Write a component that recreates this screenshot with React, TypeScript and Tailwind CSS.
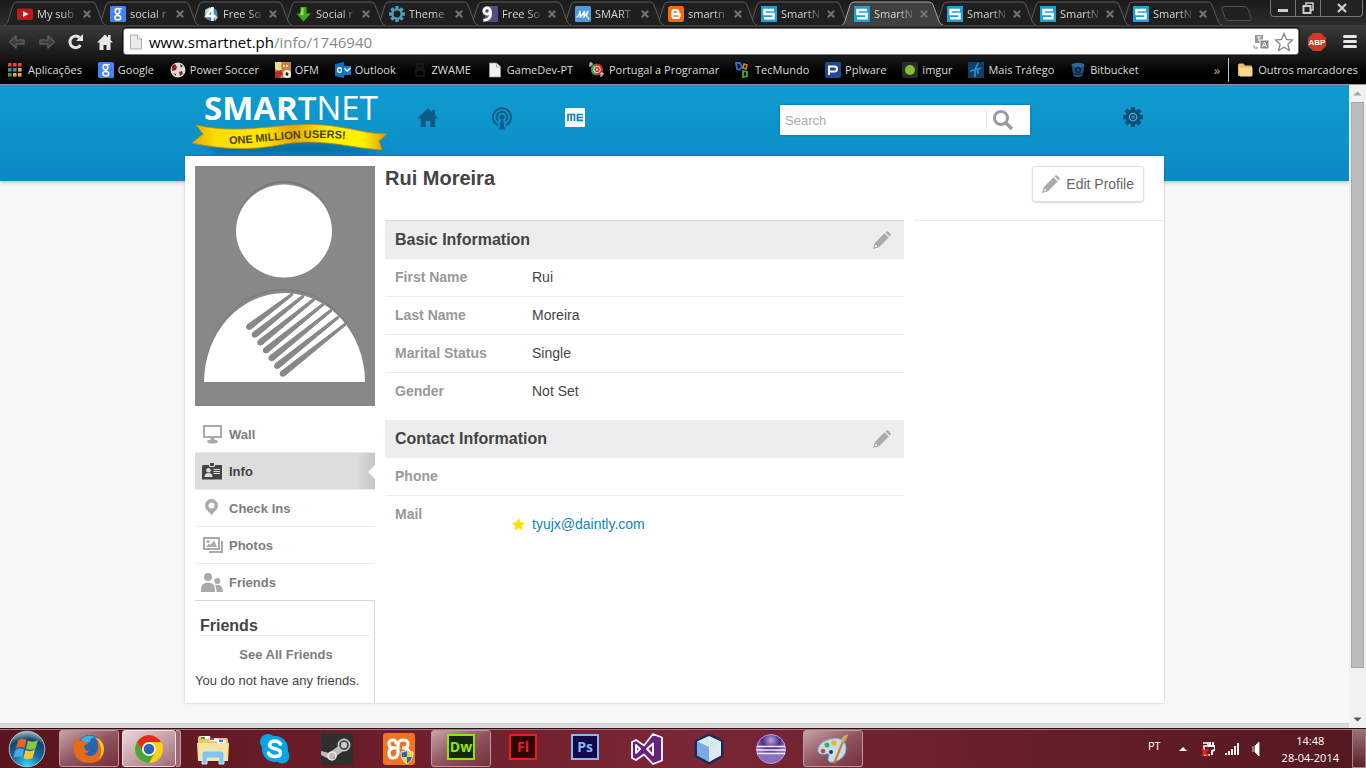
import React from 'react';
import type { ReactNode } from 'react';

const UI = "font-['Open_Sans','Noto_Sans',sans-serif]";
const ARIAL = "font-['Liberation_Sans',Arial,sans-serif]";

/* ---------- small site icons ---------- */

const Icon16 = ({ children }: { children: ReactNode }) => (
  <svg viewBox="0 0 16 16" className="size-4 shrink-0" aria-hidden="true">
    {children}
  </svg>
);

const YouTube = () => (
  <Icon16>
    <rect x="0" y="2.5" width="16" height="11.5" rx="2" fill="#c4171c" />
    <path d="M6 5v6l5.5-3z" fill="#fff" />
  </Icon16>
);

const GoogleG = () => (
  <Icon16>
    <rect width="16" height="16" rx="1.5" fill="#4583ee" />
    <g fill="none" stroke="#fff">
      <ellipse cx="7.5" cy="5.2" rx="2.3" ry="2.6" strokeWidth="1.6" />
      <path d="M9 3.2 11.8 2.4M8.6 7.6C6 8.4 7 9.4 8.6 10" strokeWidth="1.3" />
      <ellipse cx="7.8" cy="11.7" rx="2.9" ry="2.1" strokeWidth="1.5" />
    </g>
  </Icon16>
);

const Four = () => (
  <Icon16>
    <circle cx="8" cy="8" r="6.6" fill="#4b86a8" />
    <path d="M2 4l5-3 1 4-5 6zM11 9l4 2-3 4z" fill="#bcd7e6" />
    <path d="M9.5 1v14M9.5 1.5 3.5 10h9" fill="none" stroke="#fff" strokeWidth="2.4" />
  </Icon16>
);

const DownArrow = () => (
  <Icon16>
    <path d="M4.500 1h6v6.500H15L7.500 15.500.5 7.500h4z" fill="#3fae13" />
    <path d="M5.500 2h2v7H4z" fill="#8be05a" />
  </Icon16>
);

const Gear = ({ fill, hole }: { fill: string; hole: string }) => (
  <>
    {[0, 45, 90, 135].map((a) => (
      <rect key={a} x="6.3" y="0" width="3.4" height="16" rx="0.5" fill={fill} transform={`rotate(${a} 8 8)`} />
    ))}
    <circle cx="8" cy="8" r="5.800" fill={fill} />
    <circle cx="8" cy="8" r="3.4" fill={hole} />
  </>
);

const ThemeGear = () => (
  <Icon16>
    <Gear fill="#4e9bb8" hole="#202020" />
  </Icon16>
);

const Nine = () => (
  <Icon16>
    <rect width="16" height="16" fill="#5b4a82" />
    <rect width="3" height="16" fill="#2d2640" />
    <circle cx="5" cy="5" r="3.200" fill="none" stroke="#fff" strokeWidth="2.800" />
    <path d="M8.300 5c1 6-1 9-7 9.300" fill="none" stroke="#fff" strokeWidth="2.800" />
  </Icon16>
);

const ScriptM = () => (
  <Icon16>
    <rect width="16" height="16" rx="1.500" fill="#4f9be0" />
    <path
      d="M1.500 11c2 0 3-3 3.700-6l.2 6c1.500-1 2.500-3 4-6L9 11c1.500-1 2.500-4 4-6-1 2-2 6-.5 6"
      fill="none"
      stroke="#fff"
      strokeWidth="1.400"
    />
    <circle cx="13.500" cy="12.500" r="1" fill="#fff" />
  </Icon16>
);

const Blogger = () => (
  <Icon16>
    <rect width="16" height="16" rx="2.500" fill="#fb6a0a" />
    <path
      d="M6 3h2.500C10.500 3 11.500 4.500 11.500 6.300c0 .9.300 1 1.200 1V10c0 2-1.500 3-3 3H6c-1.500 0-2.700-1.200-2.700-2.700V5.700C3.300 4.200 4.500 3 6 3z"
      fill="#fff"
    />
    <path d="M6.300 6h2M6.300 10h3.500" stroke="#fb6a0a" strokeWidth="1.500" strokeLinecap="round" />
  </Icon16>
);

const SmartS = () => (
  <Icon16>
    <rect width="16" height="16" fill="#1f9fd6" />
    <path d="M13 4H3.500v4h9v4.200H3" fill="none" stroke="#fff" strokeWidth="2.500" />
  </Icon16>
);

const Apps = () => (
  <Icon16>
    {['#e2463c', '#e2463c', '#e2463c', '#35a15b', '#4285d6', '#f0a928', '#35a15b', '#f0a928', '#f0a928'].map((c, i) => (
      <rect key={i} x={(i % 3) * 5} y={1 + Math.floor(i / 3) * 5} width="3.600" height="3.600" fill={c} />
    ))}
  </Icon16>
);

const Ball = () => (
  <Icon16>
    <circle cx="8" cy="8" r="7.500" fill="#dcdcdc" />
    <path d="M2 4l3-2 2 3-1 3-4 1z" fill="#9b1c22" />
    <path d="M9 10l3-1 1 3-3 2z" fill="#9b1c22" />
    <path d="M10 2l3 2-2 2zM3 11l3 1v2z" fill="#444" />
  </Icon16>
);

const Ofm = () => (
  <Icon16>
    <rect width="16" height="16" fill="#b9824b" />
    <path d="M0 0h6l3 5-4 4-5-2z" fill="#eedb9c" />
    <circle cx="10" cy="4" r="4" fill="#d77b38" />
    <circle cx="9" cy="4" r="1" fill="#fff" />
    <circle cx="12" cy="4" r="1" fill="#fff" />
    <path d="M0 10l6-2 2 4-4 4H0z" fill="#b33322" />
    <circle cx="12" cy="12" r="4" fill="#eee" />
    <path d="M11 10l2.500 1-.5 3-2.500-1z" fill="#222" />
  </Icon16>
);

const Outlook = () => (
  <Icon16>
    <rect x="7" y="4" width="9" height="9" fill="#1e78c8" />
    <path d="M9.500 6.500l2.500 2.500L15.500 6" fill="none" stroke="#fff" strokeWidth="1.300" />
    <path d="M0 2l9-2v16l-9-2z" fill="#0f6fc0" />
    <ellipse cx="4.500" cy="8" rx="1.900" ry="2.400" fill="none" stroke="#fff" strokeWidth="1.400" />
  </Icon16>
);

const Zwame = () => (
  <Icon16>
    <path d="M5 2h6v4H5zM4 8h8v6H4z" fill="none" stroke="#1d1d1d" strokeWidth="1.500" />
  </Icon16>
);

const Doc = ({ shade = '#f1f1f1' }: { shade?: string }) => (
  <Icon16>
    <path d="M2.500 1h7l4 4v10h-11z" fill={shade} stroke="#9a9a9a" strokeWidth="0.800" />
    <path d="M9.500 1v4h4" fill="#fff" stroke="#9a9a9a" strokeWidth="0.800" />
  </Icon16>
);

const Papoula = () => (
  <Icon16>
    <circle cx="8" cy="7.500" r="6" fill="#c92d2d" />
    <path d="M6 2a6 6 0 0 0 1 11.500z" fill="#3f9c44" />
    <circle cx="8" cy="7.500" r="3.300" fill="none" stroke="#f1e4d8" strokeWidth="1" />
    <circle cx="8" cy="7.500" r="1" fill="#fff" />
    <path d="M1 5V1h2v2H1M12 15v-4h2v2h-2" fill="none" stroke="#eee" />
  </Icon16>
);

const Tec = () => (
  <Icon16>
    <path d="M1 1h4l2 4-3 3-2-1z" fill="none" stroke="#2d6fd0" strokeWidth="1.800" />
    <path d="M9 2l3 1-1 4-3-1z" fill="none" stroke="#d97a26" strokeWidth="1.500" />
    <path d="M8 9l4 1v4l-4 1z" fill="none" stroke="#45a835" strokeWidth="1.800" />
  </Icon16>
);

const Ppl = () => (
  <Icon16>
    <rect width="16" height="16" rx="2" fill="#1f4a8f" />
    <path d="M4 13V4.500h5.500a2.500 2.500 0 0 1 0 5H5" fill="none" stroke="#fff" strokeWidth="1.900" />
  </Icon16>
);

const Imgur = () => (
  <Icon16>
    <rect width="16" height="16" rx="2" fill="#2a2a2a" />
    <circle cx="8" cy="8" r="5" fill="#87bf2c" />
  </Icon16>
);

const Trafego = () => (
  <Icon16>
    <rect width="16" height="16" fill="#123f66" />
    <path d="M10 1L7 8v7M2 9l5-1 6-2M10 8v4" fill="none" stroke="#2f8fd2" strokeWidth="1.700" />
  </Icon16>
);

const Bucket = () => (
  <Icon16>
    <path d="M1.500 3l2 11q4.500 2.500 9 0l2-11z" fill="#205081" />
    <ellipse cx="8" cy="3" rx="6.500" ry="2.200" fill="#2f669b" />
    <circle cx="8" cy="8" r="2.300" fill="none" stroke="#0a1826" strokeWidth="1.300" />
    <path d="M3.500 11.500q4.500 2 9 0" fill="none" stroke="#0a1826" />
  </Icon16>
);

const Folder = () => (
  <Icon16>
    <path d="M1 3q0-1.500 1.500-1.500h4L8 3.500h6q1 0 1 1V13q0 1-1 1H2q-1 0-1-1z" fill="#e8b868" />
    <path d="M2 5.500h13.500V13q0 1.500-1.500 1.500H3z" fill="#f9d894" />
  </Icon16>
);

/* ---------- browser ---------- */

type Tab = { title: string; icon: ReactNode; active?: boolean };

const tabs: Tab[] = [
  { title: 'My sub', icon: <YouTube /> },
  { title: 'social r', icon: <GoogleG /> },
  { title: 'Free So', icon: <Four /> },
  { title: 'Social r', icon: <DownArrow /> },
  { title: 'Theme', icon: <ThemeGear /> },
  { title: 'Free So', icon: <Nine /> },
  { title: 'SMART', icon: <ScriptM /> },
  { title: 'smartn', icon: <Blogger /> },
  { title: 'SmartN', icon: <SmartS /> },
  { title: 'SmartN', icon: <SmartS />, active: true },
  { title: 'SmartN', icon: <SmartS /> },
  { title: 'SmartN', icon: <SmartS /> },
  { title: 'SmartN', icon: <SmartS /> },
];

const TabStrip = () => (
  <div className="flex h-[25px] bg-gradient-to-b from-[#1b1b1b] to-[#2b2b2b] pl-[5px]">
    <ul className="flex">
      {tabs.map((t, i) => (
        <li key={i} className="relative w-[93px] shrink-0" style={{ zIndex: t.active ? 30 : 20 - i }}>
          <svg viewBox="0 0 103 25" className="absolute top-0 left-0 h-[25px] w-[103px]" aria-hidden="true">
            <path
              d="M0 25C2 24 2 23 3 21L8 5Q9 2 12 2H87Q90 2 91 5L97 21C98 23 98 24 101 25"
              fill={t.active ? '#404040' : '#1f1f1f'}
              stroke={t.active ? '#a3a3a3' : '#5a5a5a'}
            />
          </svg>
          <div className="relative flex h-[25px] items-center pt-[2px] pl-3">
            {t.icon}
            <button className="ml-1 w-[42px] text-left text-[11px] leading-4 whitespace-nowrap text-[#d6d6d6] [mask-image:linear-gradient(to_right,#000_60%,transparent)]">
              {t.title}
            </button>
            <button aria-label="Close tab" className="flex size-4 items-center justify-center">
              <svg viewBox="0 0 8 8" className="size-2" aria-hidden="true">
                <path d="M0.800 0.800l6.400 6.400M7.200 0.800L0.800 7.200" stroke="#707070" strokeWidth="2.200" />
              </svg>
            </button>
          </div>
        </li>
      ))}
    </ul>
    <button aria-label="New tab" className="ml-[7px] self-start pt-[6px]">
      <svg viewBox="0 0 32 15" className="h-[15px] w-8" aria-hidden="true">
        <path d="M3 .5h20q3 0 4 3l3 8q1 3-2 3H8q-3 0-4-3L1 3.500Q0 .5 3 .5z" fill="#202020" stroke="#555" />
      </svg>
    </button>
    <div className="mr-[3px] ml-auto flex h-[17px] divide-x divide-[#777] rounded-b border border-t-0 border-[#777] bg-[#222]">
      <button aria-label="Minimise" className="flex w-[25px] items-center justify-center">
        <svg viewBox="0 0 12 12" className="size-3" aria-hidden="true">
          <rect x="1" y="7" width="10" height="3" fill="#ccc" />
        </svg>
      </button>
      <button aria-label="Restore" className="flex w-[25px] items-center justify-center">
        <svg viewBox="0 0 12 12" className="size-3" aria-hidden="true">
          <path d="M4 3V1h7v7H9" fill="none" stroke="#ccc" strokeWidth="1.500" />
          <rect x="1.500" y="4" width="7" height="7" fill="none" stroke="#ccc" strokeWidth="2" />
        </svg>
      </button>
      <button aria-label="Close" className="flex w-[41px] items-center justify-center">
        <svg viewBox="0 0 12 12" className="size-3" aria-hidden="true">
          <path d="M2 2l8 8M10 2l-8 8" stroke="#ccc" strokeWidth="2.400" />
        </svg>
      </button>
    </div>
  </div>
);

const NavArrow = ({ flip }: { flip?: boolean }) => (
  <svg viewBox="0 0 18 16" className={flip ? 'h-4 w-[18px] -scale-x-100' : 'h-4 w-[18px]'} aria-hidden="true">
    <path d="M8 2L1.500 8 8 14v-4h8V6H8z" fill="#3b3b3b" stroke="#5c5c5c" strokeWidth="1.500" strokeLinejoin="round" />
  </svg>
);

const Toolbar = () => (
  <div className="flex h-8 items-center pt-px pl-2">
    <button aria-label="Back">
      <NavArrow />
    </button>
    <button aria-label="Forward" className="ml-3">
      <NavArrow flip />
    </button>
    <button aria-label="Reload" className="ml-[11px]">
      <svg viewBox="0 0 18 18" className="size-[18px]" aria-hidden="true">
        <path d="M13.500 12.200A5.800 5.800 0 1 1 12.500 4.500" fill="none" stroke="#e6e6e6" strokeWidth="3" />
        <path d="M16 1v7H9z" fill="#e6e6e6" />
      </svg>
    </button>
    <button aria-label="Home" className="ml-3">
      <svg viewBox="0 0 16 16" className="size-4" aria-hidden="true">
        <path d="M8 .5L0 8.500h2.500V16H6.500v-5h3v5h4V8.500H16l-2.500-2.500V1h-2.500v2.500z" fill="#e9e9e9" />
      </svg>
    </button>
    <div className="ml-[10px] flex h-[27px] flex-1 items-center rounded-[3px] border border-[#777] bg-white px-[4px] outline-1 outline-[#111]">
      <Doc shade="#ececec" />
      <div role="textbox" aria-label="Address" tabIndex={0} className="ml-[5px] flex-1 text-[15px] leading-5 text-[#888]">
        <span className="text-black">www.smartnet.ph</span>/info/1746940
      </div>
      <button aria-label="Translate">
        <svg viewBox="0 0 16 16" className="size-4" aria-hidden="true">
          <rect x="2" y="1" width="8" height="8" fill="#999" />
          <rect x="7" y="6" width="9" height="9" fill="#8a8a8a" stroke="#fff" />
          <path d="M4 3h4M6 3v4" stroke="#fff" />
          <path d="M9.500 13l2-5 2 5M10.500 11.500h2" fill="none" stroke="#fff" />
          <path d="M1 11v3h3M3 12.500L4.500 14 3 15.500" fill="none" stroke="#999" />
        </svg>
      </button>
      <button aria-label="Bookmark this page" className="ml-[5px]">
        <svg viewBox="0 0 20 20" className="size-5" aria-hidden="true">
          <path
            d="M10 1.500l2.500 6 6 .5-4.600 4.200 1.400 6.300L10 15.200l-5.300 3.300 1.400-6.300L1.500 8l6-.5z"
            fill="#fff"
            stroke="#858585"
            strokeWidth="1.300"
          />
        </svg>
      </button>
    </div>
    <button aria-label="Ad blocker" className="ml-2">
      <svg viewBox="0 0 20 20" className="size-5" aria-hidden="true">
        <path d="M6 1h8l5 5v8l-5 5H6l-5-5V6z" fill="#d13a22" />
        <text x="10" y="13" textAnchor="middle" fontSize="8" fontWeight="700" fill="#fff" fontFamily="Liberation Sans">
          ABP
        </text>
      </svg>
    </button>
    <button aria-label="Menu" className="mr-[9px] ml-[16px] flex w-[14px] flex-col gap-[2px]">
      <span className="h-[3px] w-full rounded-sm bg-[#e6e6e6]" />
      <span className="h-[3px] w-full rounded-sm bg-[#e6e6e6]" />
      <span className="h-[3px] w-full rounded-sm bg-[#e6e6e6]" />
    </button>
  </div>
);

const bookmarks: [string, ReactNode][] = [
  ['Aplicações', <Apps />],
  ['Google', <GoogleG />],
  ['Power Soccer', <Ball />],
  ['OFM', <Ofm />],
  ['Outlook', <Outlook />],
  ['ZWAME', <Zwame />],
  ['GameDev-PT', <Doc />],
  ['Portugal a Programar', <Papoula />],
  ['TecMundo', <Tec />],
  ['Pplware', <Ppl />],
  ['imgur', <Imgur />],
  ['Mais Tráfego', <Trafego />],
  ['Bitbucket', <Bucket />],
];

const BookmarkBar = () => (
  <nav aria-label="Bookmarks" className="flex h-[27px] items-center pr-2 pb-[2px] pl-2 text-[11px] leading-4 text-[#dcdcdc]">
    <ul className="mr-[75px] flex flex-1 justify-between">
      {bookmarks.map(([name, icon]) => (
        <li key={name}>
          <a href="#" className="flex items-center gap-1 whitespace-nowrap">
            {icon}
            {name}
          </a>
        </li>
      ))}
    </ul>
    <button aria-label="More bookmarks" className="text-[13px] text-[#aaa]">
      »
    </button>
    <a href="#" className="ml-2 flex h-6 items-center gap-[5px] border-l border-[#b8c4d4] pl-2 whitespace-nowrap">
      <Folder />
      Outros marcadores
    </a>
  </nav>
);

/* ---------- site ---------- */

const Logo = () => (
  <a href="#" aria-label="SmartNet" className="block pl-1">
    <svg viewBox="0 0 204 70" className="h-[70px] w-[204px]">
      <defs>
        <linearGradient id="ribbon" x1="0" x2="1">
          <stop offset="0" stopColor="#e9a800" />
          <stop offset="0.120" stopColor="#fbdc07" />
          <stop offset="0.350" stopColor="#ffe800" />
          <stop offset="0.520" stopColor="#e2a800" />
          <stop offset="0.700" stopColor="#fff200" />
          <stop offset="0.880" stopColor="#ffee00" />
          <stop offset="1" stopColor="#dc9a00" />
        </linearGradient>
        <filter id="soft" x="-20%" y="-50%" width="140%" height="220%">
          <feGaussianBlur stdDeviation="4" />
        </filter>
        <path id="slogan" d="M40 59C80 58 110 49 166 55" />
      </defs>
      <path d="M14 58C70 66 110 50 190 66L188 68H30z" fill="#064a73" opacity="0.600" filter="url(#soft)" />
      <text x="15" y="35" fontSize="33" fill="#fff" fontFamily="'Open Sans'">
        <tspan fontWeight="700">SMAR</tspan>
        <tspan fontWeight="600">T</tspan>
        <tspan fontWeight="400">NET</tspan>
      </text>
      <path
        d="M7 40C60 52 100 33 150 42C170 45 180 49 198 49L190 56L193 65C160 63 130 52 90 60C60 66 30 64 3 58L14 49z"
        fill="url(#ribbon)"
        stroke="#c98a00"
        strokeWidth="0.800"
      />
      <text fontSize="11" fontWeight="700" fill="#4b4400" fontFamily="'Liberation Sans'">
        <textPath href="#slogan">ONE MILLION USERS!</textPath>
      </text>
    </svg>
  </a>
);

const SiteHeader = () => (
  <header className="h-24 shrink-0 bg-gradient-to-b from-[#0f9dd0] to-[#0b89c4] shadow-[0_1px_4px_rgba(0,0,0,0.300)]">
    <div className="mx-auto flex max-w-[979px] items-start">
      <Logo />
      <nav className="flex pt-[22px] pl-[24px]" aria-label="Main">
        <a href="#" aria-label="Home" className="mr-[52px]">
          <svg viewBox="0 0 22 22" className="size-[22px]" aria-hidden="true">
            <path d="M11 1L.5 11.500h3.200V20h5v-6h4.500v6h5v-8.500h3.300L18 8V3h-3v2z" fill="#0a5c85" />
          </svg>
        </a>
        <a href="#" aria-label="Check ins" className="mr-[52px]">
          <svg viewBox="0 0 22 24" className="h-6 w-[22px]" aria-hidden="true">
            <g fill="none" stroke="#0a5c85" strokeWidth="2">
              <path d="M7 18.300A9 9 0 1 1 15 18.300" />
              <path d="M7.500 14A5.300 5.300 0 1 1 14.500 14" />
            </g>
            <circle cx="11" cy="10" r="2.600" fill="#0a5c85" />
            <path d="M10 13h2l2 9.500H8z" fill="#0a5c85" />
          </svg>
        </a>
        <a href="#" aria-label="Me">
          <svg viewBox="0 0 20 20" className="mt-px size-5" aria-hidden="true">
            <rect y="0" width="20" height="19" rx="1" fill="#fff" />
            <path d="M3 13V6.500h6.500V13M6.200 6.500V13M18 6.500h-5.500v5.800H18M12.500 9.500H18" fill="none" stroke="#0e86b8" strokeWidth="1.700" />
          </svg>
        </a>
      </nav>
      <form className="mt-5 ml-auto flex h-[30px] w-[250px] items-center bg-white shadow-[0_0_3px_rgba(0,0,0,0.250)]">
        <label htmlFor="search" className="sr-only">
          Search
        </label>
        <input
          id="search"
          placeholder="Search"
          className="h-full min-w-0 flex-1 px-[5px] text-[13px] text-[#444] outline-none placeholder:text-[#aaa]"
        />
        <button type="button" aria-label="Search" className="h-6 w-11 border-l border-[#eaeaea] pl-[6px]">
          <svg viewBox="0 0 20 20" className="size-5" aria-hidden="true">
            <circle cx="8" cy="8" r="6.500" fill="none" stroke="#9b9b9b" strokeWidth="3" />
            <path d="M13 13l6 6" stroke="#9b9b9b" strokeWidth="3.500" />
          </svg>
        </button>
      </form>
      <button aria-label="Settings" className="mt-[22px] mr-[21px] ml-[93px]">
        <svg viewBox="0 0 16 16" className="size-5" aria-hidden="true">
          <Gear fill="#0a4f75" hole="#5fa9cf" />
          <circle cx="8" cy="8" r="2.500" fill="#0a4f75" />
          <circle cx="8" cy="8" r="1.300" fill="#0e93c9" />
        </svg>
      </button>
    </div>
  </header>
);

const Pencil = () => (
  <svg viewBox="0 0 18 18" className="size-[18px]" aria-hidden="true">
    <path d="M11.500 2.300L15.700 6.500 6 16.200 0 18l1.800-6z" fill="#aaa" />
    <path d="M12.600 1.400L14 0Q16.500 1 18 4L16.600 5.400z" fill="#aaa" />
    <circle cx="3" cy="15" r="1.100" fill="#f3f3f3" />
  </svg>
);

const Avatar = () => (
  <svg viewBox="0 0 180 240" className="h-60 w-[180px]" role="img" aria-label="Profile picture">
    <rect width="180" height="240" fill="#888" />
    <circle cx="89" cy="63" r="48" fill="#777" />
    <path d="M9 214a80 91 0 0 1 160 0z" fill="#777" />
    <ellipse cx="89" cy="63.500" rx="48" ry="46.800" fill="#888" />
    <ellipse cx="89" cy="65" rx="48" ry="46.500" fill="#fff" />
    <path d="M9.500 214a79.500 90 0 0 1 159 0z" fill="#888" />
    <path d="M9 216a80.500 89 0 0 1 161 0z" fill="#fff" />
    <rect y="216" width="180" height="24" fill="#888" />
    <g fill="#888" stroke="#888" strokeWidth="1" strokeLinejoin="round">
      {[0, 1, 2, 3, 4, 5, 6].map((i) => {
        const x = 54 + i * 5.6;
        const y = 161 + i * 7.8;
        const ex = [97, 108, 119, 128, 136, 143, 150][i];
        const ey = [127, 129, 132, 137, 143, 150, 157][i];
        return (
          <g key={i}>
            <circle cx={x} cy={y} r="2.500" />
            <path d={`M${x - 2} ${y - 2}L${ex} ${ey}L${ex + 1} ${ey + 2}L${x + 2} ${y + 2}z`} />
          </g>
        );
      })}
    </g>
  </svg>
);

const menu: { name: string; active?: boolean; icon: ReactNode }[] = [
  {
    name: 'Wall',
    icon: (
      <g fill="#aaa">
        <path d="M2 1h19v13H2zM4 3v9h15V3z" fillRule="evenodd" />
        <path d="M9.500 14h4v2h-4z" />
        <ellipse cx="11.500" cy="17.500" rx="5.500" ry="2" />
      </g>
    ),
  },
  {
    name: 'Info',
    active: true,
    icon: (
      <g>
        <path d="M2.500 4H9V2h4v2h7.500q.5 0 .5.5V18q0 .5-.5.5h-19Q1 18.500 1 18V5.500Q1 4 2.500 4z" fill="#444" />
        <path d="M8.500 4v1.500h5V4" fill="none" stroke="#ddd" />
        <circle cx="7.500" cy="9.300" r="2.300" fill="#ddd" />
        <path d="M3.500 16q0-4 4-4t4 4z" fill="#ddd" />
        <path d="M12.500 8.500H19M12.500 10.500H19M12.500 12.500H19" stroke="#ddd" />
      </g>
    ),
  },
  {
    name: 'Check Ins',
    icon: (
      <path
        d="M10.500 1a6.500 6.500 0 0 1 6.500 6.500c0 5-5 6.500-6.500 10-1.500-3.500-6.500-5-6.500-10A6.500 6.500 0 0 1 10.500 1zm0 3.500a3 3 0 1 0 0 6 3 3 0 0 0 0-6z"
        fill="#aaa"
        fillRule="evenodd"
      />
    ),
  },
  {
    name: 'Photos',
    icon: (
      <g fill="#aaa">
        <path d="M2 2h17v13H2zM4 4v9h13V4z" fillRule="evenodd" />
        <path d="M20 6h2v12H8v-2h12z" />
        <path d="M5 12l3-3.500 1.500 1.500L13 5.500l3 6.500z" />
        <circle cx="7" cy="6.500" r="1.500" />
      </g>
    ),
  },
  {
    name: 'Friends',
    icon: (
      <g fill="#aaa">
        <circle cx="7" cy="5" r="4" />
        <path d="M0 20c0-6 1.500-9.500 7-9.500s7 3.500 7 9.500z" />
        <circle cx="16.300" cy="9" r="3" />
        <path d="M15.500 20c0-3-.5-5-1.500-6.500 5-1.500 8 1 8 6.500z" />
      </g>
    ),
  },
];

const Sidebar = () => (
  <aside className="w-[180px] shrink-0">
    <Avatar />
    <nav className="mt-[10px]" aria-label="Profile">
      <ul>
        {menu.map((m) => (
          <li key={m.name} className="h-[37px] border-b border-[#ebebeb] last:border-[#d6d6d6]">
            <a
              href="#"
              className={
                m.active
                  ? 'flex h-full items-center bg-linear-to-r from-[#ddd] from-90% to-[#c4c4c4] pt-[2px] pl-[6px] text-[13px] font-bold text-[#444]'
                  : 'flex h-full items-center pt-[2px] pl-[6px] text-[13px] font-bold text-[#7d7d7d]'
              }
            >
              <svg viewBox="0 0 22 22" className="mr-[6px] size-[22px]" aria-hidden="true">
                {m.icon}
              </svg>
              {m.name}
              {m.active && (
                <svg viewBox="0 0 7 14" className="ml-auto h-[14px] w-[7px]" aria-hidden="true">
                  <path d="M7 0L0 7l7 7z" fill="#fff" />
                </svg>
              )}
            </a>
          </li>
        ))}
      </ul>
    </nav>
    <section className="border-r border-[#d6d6d6] pt-[15px] pb-[13px]">
      <h3 className="mx-[5px] h-5 border-b border-[#ebebeb] text-[16px] leading-5 font-bold text-[#444]">Friends</h3>
      <a href="#" className="mt-[10px] block pl-[3px] text-center text-[13px] leading-[18px] font-bold text-[#7d7d7d]">
        See All Friends
      </a>
      <p className="mt-2 text-[13px] leading-[18px] text-[#444]">You do not have any friends.</p>
    </section>
  </aside>
);

const SectionHead = ({ children }: { children: ReactNode }) => (
  <div className="flex h-[38px] items-center justify-between bg-[#ededed] pr-[13px] pl-[10px]">
    <h2 className="text-[16px] font-bold text-[#444]">{children}</h2>
    <button aria-label="Edit section">
      <Pencil />
    </button>
  </div>
);

const Row = ({ name, children }: { name: string; children?: ReactNode }) => (
  <tr className="group h-[38px] align-top">
    <th
      scope="row"
      className="w-[147px] border-b border-[#ebebeb] pt-2 pl-[10px] text-left text-[14px] leading-5 font-bold text-[#999] group-last:border-b-0"
    >
      {name}
    </th>
    <td className="border-b border-[#ebebeb] pt-2 text-[14px] leading-5 text-[#444] group-last:border-b-0">{children}</td>
  </tr>
);

const Main = () => (
  <div className="min-w-0 flex-1">
    <div className="flex h-[54px] items-start justify-between">
      <h1 className="text-[20px] leading-6 font-bold text-[#444]">Rui Moreira</h1>
      <button className="mr-5 flex h-9 items-center gap-[6px] rounded border border-[#ddd] bg-white px-[9px] text-[14px] text-[#666] shadow-[0_1px_2px_rgba(0,0,0,0.150)]">
        <Pencil />
        Edit Profile
      </button>
    </div>
    <div className="flex gap-[10px]">
      <div className="flex-1">
        <section className="border-t border-[#d9d9d9]">
          <SectionHead>Basic Information</SectionHead>
          <table className="w-full border-separate border-spacing-0">
            <tbody>
              <Row name="First Name">Rui</Row>
              <Row name="Last Name">Moreira</Row>
              <Row name="Marital Status">Single</Row>
              <Row name="Gender">Not Set</Row>
            </tbody>
          </table>
        </section>
        <section className="mt-[9px]">
          <SectionHead>Contact Information</SectionHead>
          <table className="w-full border-separate border-spacing-0">
            <tbody>
              <Row name="Phone" />
              <Row name="Mail">
                <a href="#" className="-ml-5 flex items-center gap-[7px] pt-[10px] text-[#0b86b8]">
                  <svg viewBox="0 0 13 13" className="size-[13px]" aria-hidden="true">
                    <path d="M6.500 0l2 4.300 4.500.5-3.300 3.100.9 4.700-4.100-2.400-4.100 2.400.9-4.700L0 4.800l4.500-.5z" fill="#fbe100" />
                  </svg>
                  tyujx@daintly.com
                </a>
              </Row>
            </tbody>
          </table>
        </section>
      </div>
      <div className="w-[250px] border-t border-[#ebebeb]" />
    </div>
  </div>
);

const Scrollbar = () => (
  <div className="flex w-[17px] shrink-0 flex-col items-center bg-[#f1f1f1]" aria-hidden="true">
    <svg viewBox="0 0 17 17" className="size-[17px]">
      <path d="M4.500 10.500L8.500 6.500l4 4z" fill="#a3a3a3" />
    </svg>
    <div className="mb-[43px] w-[13px] flex-1 border border-[#a8a8a8] bg-[#bcbcbc]" />
    <svg viewBox="0 0 17 17" className="size-[17px]">
      <path d="M4.500 6.500h8l-4 4z" fill="#505050" />
    </svg>
  </div>
);

/* ---------- task bar ---------- */

const Big = ({ children }: { children: ReactNode }) => (
  <svg viewBox="0 0 32 32" className="size-8" aria-hidden="true">
    {children}
  </svg>
);

const Adobe = ({ label, fg, bg }: { label: string; fg: string; bg: string }) => (
  <Big>
    <rect x="3" y="2" width="26" height="24" fill={bg} stroke={fg} strokeWidth="2" />
    <text x="16" y="19" textAnchor="middle" fontSize="14" fontWeight="700" fill={fg} fontFamily="'Open Sans'">
      {label}
    </text>
  </Big>
);

const Firefox = () => (
  <Big>
    <circle cx="17" cy="15" r="13" fill="#2565b0" />
    <path d="M8 6q7-6 14-2-5 1-5 5-4 0-6 3z" fill="#39b2dd" />
    <path
      d="M2 5q2 1 3 3 2-1 6 0 3 1 4 3-3 0-4 3 1 4 5 4-2 3-5 2 4 5 10 2 5-3 4-10 0-5-4-8 11 3 10 14-1 11-13 12Q2 30 1 18 0 10 2 5z"
      fill="#e56b15"
    />
    <path d="M22 4q8 3 9 11 0 7-5 11 4-7 1-14-1-5-5-8z" fill="#fbc72c" />
  </Big>
);

const Chrome = () => (
  <Big>
    <circle cx="16" cy="16" r="14" fill="#fcd116" />
    <path d="M3.900 9A14 14 0 0 1 28.100 9H16a7 7 0 0 0-6.500 9.500z" fill="#de2c20" />
    <path d="M3.900 9A14 14 0 0 0 16 30l6-10.500a7 7 0 0 1-12 0z" fill="#45a63c" />
    <circle cx="16" cy="16" r="6.800" fill="#fff" />
    <circle cx="16" cy="16" r="5.300" fill="#2b63b5" />
  </Big>
);

const Explorer = () => (
  <Big>
    <path d="M1 5q0-2 2-2h9l2 2h15q2 0 2 2v20H1z" fill="#e8c868" />
    <path d="M4 3h9v3H4zM12 5h9v3h-9zM20 7h9v3h-9z" fill="#fff" />
    <path d="M4 4h4v2H4z" fill="#2fa038" />
    <path d="M13 5h4v2h-4z" fill="#cf3b2c" />
    <path d="M22 7h4v2h-4z" fill="#2a83d6" />
    <path d="M0 10h32l-1 18H1z" fill="#f6e39c" />
    <path d="M5 31V21q0-3 3-3h16q3 0 3 3v10h-5v-6H10v6z" fill="#83c5ea" stroke="#cfeaf8" />
  </Big>
);

const Skype = () => (
  <Big>
    <circle cx="16" cy="16" r="13" fill="#03a5e8" />
    <circle cx="9" cy="9" r="8" fill="#03a5e8" />
    <circle cx="23" cy="23" r="7.500" fill="#03a5e8" />
    <path
      d="M21.500 11q-2-3-6-3t-5 3.500q0 3 5.500 4.200t5.500 4.300q0 3.500-5.500 3.500-5 0-6.500-3.500"
      fill="none"
      stroke="#fff"
      strokeWidth="3.600"
      strokeLinecap="round"
    />
  </Big>
);

const Steam = () => (
  <Big>
    <rect width="32" height="32" rx="3" fill="#2f2f2f" />
    <path d="M0 18l8 2 12-9 5 5-11 8q-3 5-8 1l-6-3z" fill="#bcbcbc" />
    <circle cx="11" cy="23" r="4" fill="none" stroke="#efefef" strokeWidth="1.500" />
    <circle cx="23" cy="12" r="6.500" fill="#c9c9c9" />
    <circle cx="23" cy="12" r="4" fill="#c9c9c9" stroke="#3a3a3a" strokeWidth="1.600" />
  </Big>
);

const Xampp = () => (
  <Big>
    <rect width="32" height="32" rx="3" fill="#ee7420" />
    <path
      d="M14 15H10q-4 0-4-4t4-4q3 0 3 3M10 15q-4 1-4 5 0 5 4 5 5 0 5-6v-7q0-5 5-5t5 4q0 4-4 4h-2q7 0 7 5"
      fill="none"
      stroke="#fff"
      strokeWidth="3.200"
      strokeLinecap="round"
    />
    <path d="M24 17q3 2 6 2 0 9-6 12-6-3-6-12 3 0 6-2z" fill="#f4d13c" stroke="#e6edf5" />
    <path d="M24 18q-3 1.500-5.500 1.500 0 2.500.6 4.500H24zM24 24h5q-1.200 4.500-5 6.500z" fill="#2d66b8" />
  </Big>
);

const VisualStudio = () => (
  <Big>
    <path
      d="M22 1l9 3.500v23L22 31l-9-9.500L5 27l-4-2V9l4-2 8 5.500zM22 10.500L16 16l6 6zM5 12v8l4-4z"
      fill="#68217a"
      fillRule="evenodd"
      stroke="#fff"
      strokeWidth="1.800"
      strokeLinejoin="round"
    />
  </Big>
);

const NetBeans = () => (
  <Big>
    <path d="M16 2l13 6v15l-13 7-13-7V8z" fill="#a9c6ee" stroke="#1b2c5c" strokeWidth="3" strokeLinejoin="round" />
    <path d="M4 8.500L16 3l12 5.500L16 14z" fill="#d3ece4" />
    <path d="M16 14l12-5.500V22.500L16 29z" fill="#dfe8f0" />
    <path d="M16 14L4 8.500V22.500L16 29z" fill="#7ea8e3" />
  </Big>
);

const Eclipse = () => (
  <Big>
    <defs>
      <radialGradient id="ecl" cx="0.500" cy="0.200">
        <stop offset="0" stopColor="#b7a3d8" />
        <stop offset="0.600" stopColor="#4c2f86" />
        <stop offset="1" stopColor="#8b6fc0" />
      </radialGradient>
    </defs>
    <circle cx="16" cy="16" r="14.500" fill="url(#ecl)" stroke="#b59bd8" />
    <path d="M2 13.500h28M1.500 17h29M2 20.500h28" stroke="#f1ecfa" strokeWidth="1.500" />
  </Big>
);

const Paint = () => (
  <Big>
    <path d="M14 6q14-3 15 9 0 11-13 14-7 1-4-6 1-3-4-2-8 1-7-5Q3 8 14 6z" fill="#c4def0" stroke="#7db2d8" />
    <circle cx="10" cy="12" r="2.500" fill="#46b04b" />
    <circle cx="17" cy="10" r="2.800" fill="#f0b22c" />
    <circle cx="6" cy="18" r="2.300" fill="#d8412e" />
    <circle cx="14" cy="19" r="2" fill="#273c61" />
    <path d="M25 8l2 1-9 22-2-1z" fill="#dd7a1e" />
    <path d="M24 8q0-5 7-7-1 6-4 8z" fill="#cda56b" />
  </Big>
);

const tasks: { name: string; icon: ReactNode; state?: 'open' | 'focused' }[] = [
  { name: 'Firefox', icon: <Firefox />, state: 'open' },
  { name: 'Chrome', icon: <Chrome />, state: 'focused' },
  { name: 'Explorer', icon: <Explorer /> },
  { name: 'Skype', icon: <Skype /> },
  { name: 'Steam', icon: <Steam /> },
  { name: 'XAMPP', icon: <Xampp /> },
  { name: 'Dreamweaver', icon: <Adobe label="Dw" fg="#8fe600" bg="#16270a" />, state: 'open' },
  { name: 'Flash', icon: <Adobe label="Fl" fg="#f01c1c" bg="#2e0606" /> },
  { name: 'Photoshop', icon: <Adobe label="Ps" fg="#86b7f5" bg="#12084a" /> },
  { name: 'Visual Studio', icon: <VisualStudio /> },
  { name: 'NetBeans', icon: <NetBeans /> },
  { name: 'Eclipse', icon: <Eclipse /> },
  { name: 'Paint', icon: <Paint />, state: 'open' },
];

const Taskbar = () => (
  <footer className="flex h-10 shrink-0 items-stretch border-t border-[#2a1018] bg-linear-to-r from-[#5a151d] via-[#7b2635] via-50% to-[#541820] text-white shadow-[inset_0_1px_0_#a8717a]">
    <button aria-label="Start" className="flex w-[59px] items-center pl-2">
      <svg viewBox="0 0 38 38" className="size-[38px]" aria-hidden="true">
        <defs>
          <radialGradient id="orb" cx="0.500" cy="0.950" r="0.900">
            <stop offset="0" stopColor="#35d8fb" />
            <stop offset="0.450" stopColor="#156a9f" />
            <stop offset="0.800" stopColor="#15446e" />
            <stop offset="1" stopColor="#8ba9bd" />
          </radialGradient>
        </defs>
        <circle cx="19" cy="19" r="17.800" fill="url(#orb)" stroke="#a7c3d4" />
        <path d="M10 10.500q4-3 8.500-.5l-2 8q-4-2-8.500 .5z" fill="#e8622a" />
        <path d="M20 10.500q4.500 2.500 10-.5l-2.500 8.500q-5 2.500-9.500 0z" fill="#8cc63f" />
        <path d="M7.500 20q4-3 8.500-.5l-2 8q-4-2-8.500 .5z" fill="#4aa8e8" />
        <path d="M17.500 20q4.500 2.500 9.500-.5l-2.500 8.500q-5 2.500-9 0z" fill="#fbc72c" />
      </svg>
    </button>
    <div className="flex gap-[2px] py-px">
      {tasks.map((t) => (
        <div key={t.name} className="flex w-[60px] items-stretch">
          <button
            aria-label={t.name}
            className={
              t.state === 'focused'
                ? 'ml-px flex w-[54px] items-center justify-center rounded-[3px] border border-[#f0dde0] bg-linear-to-br from-[#ead9dc] to-[#a26c77]'
                : t.state === 'open'
                  ? 'flex w-full items-center justify-center rounded-[3px] border border-[#c09aa2] bg-linear-to-br from-[#c7a3aa] via-[#8f5560] to-[#73303c]'
                  : 'flex w-full items-center justify-center'
            }
          >
            {t.icon}
          </button>
          {t.state === 'focused' && <span className="w-[5px] rounded-r-[3px] border border-l-0 border-[#c09aa2] bg-[#9c6a74]" />}
        </div>
      ))}
    </div>
    <div className="ml-auto flex items-center text-[12px] leading-[17px]">
      <span className="mr-[18px] pb-[6px] text-[11px]">PT</span>
      <button aria-label="Show hidden icons" className="mr-[14px]">
        <svg viewBox="0 0 8 4" className="h-1 w-2" aria-hidden="true">
          <path d="M0 4l4-4 4 4z" fill="#fff" />
        </svg>
      </button>
      <svg viewBox="0 0 14 16" className="mr-[10px] h-4 w-[14px]" aria-label="Battery" role="img">
        <path d="M2 2h5v3H3v9h6" fill="none" stroke="#fff" strokeWidth="1.500" />
        <path d="M9 1v4M12 1v4M7 5h7v2q0 3-3 3v4" fill="none" stroke="#fff" strokeWidth="1.800" />
        <path d="M1 8l6 7M7 8l-6 7" stroke="#f01818" strokeWidth="2.200" />
      </svg>
      <svg viewBox="0 0 14 12" className="mr-[13px] h-3 w-[14px]" aria-label="Network" role="img">
        <path d="M1 12v-2M4 12V8M7 12V6M10 12V3M13 12V0" stroke="#fff" strokeWidth="1.900" />
      </svg>
      <svg viewBox="0 0 8 14" className="mr-[22px] h-[14px] w-2" aria-label="Volume" role="img">
        <path d="M1 4v6M3 4l4-4v14l-4-4z" fill="#fff" stroke="#fff" strokeWidth="0.800" />
      </svg>
      <div className="mr-[13px] text-center text-[11px]">
        <div>14:48</div>
        <div>28-04-2014</div>
      </div>
      <button
        aria-label="Show desktop"
        className="h-full w-[14px] border border-[#a98087] bg-linear-to-b from-[#9a727a] to-[#5c2029]"
      />
    </div>
  </footer>
);

export default function App() {
  return (
    <div className={`flex min-h-screen flex-col overflow-hidden ${UI}`}>
      <div className="shrink-0 border-b border-[#9a9a9a] bg-black">
        <TabStrip />
        <div className="bg-linear-to-b from-[#3c3c3c] via-[#141414] via-60% to-black">
          <Toolbar />
          <BookmarkBar />
        </div>
      </div>
      <div className={`flex flex-1 ${ARIAL}`}>
        <div className="flex min-w-0 flex-1 flex-col bg-[#f7f7f7]">
          <SiteHeader />
          <main className="relative mx-auto -mt-[25px] flex w-full max-w-[979px] gap-[10px] bg-white pt-[10px] pl-[10px] shadow-[0_0_2px_rgba(0,0,0,0.250)]">
            <Sidebar />
            <Main />
          </main>
          <div className="mt-auto h-[5px] border-t border-[#cfcfcf] bg-[#dadada]" />
        </div>
        <Scrollbar />
      </div>
      <Taskbar />
    </div>
  );
}
